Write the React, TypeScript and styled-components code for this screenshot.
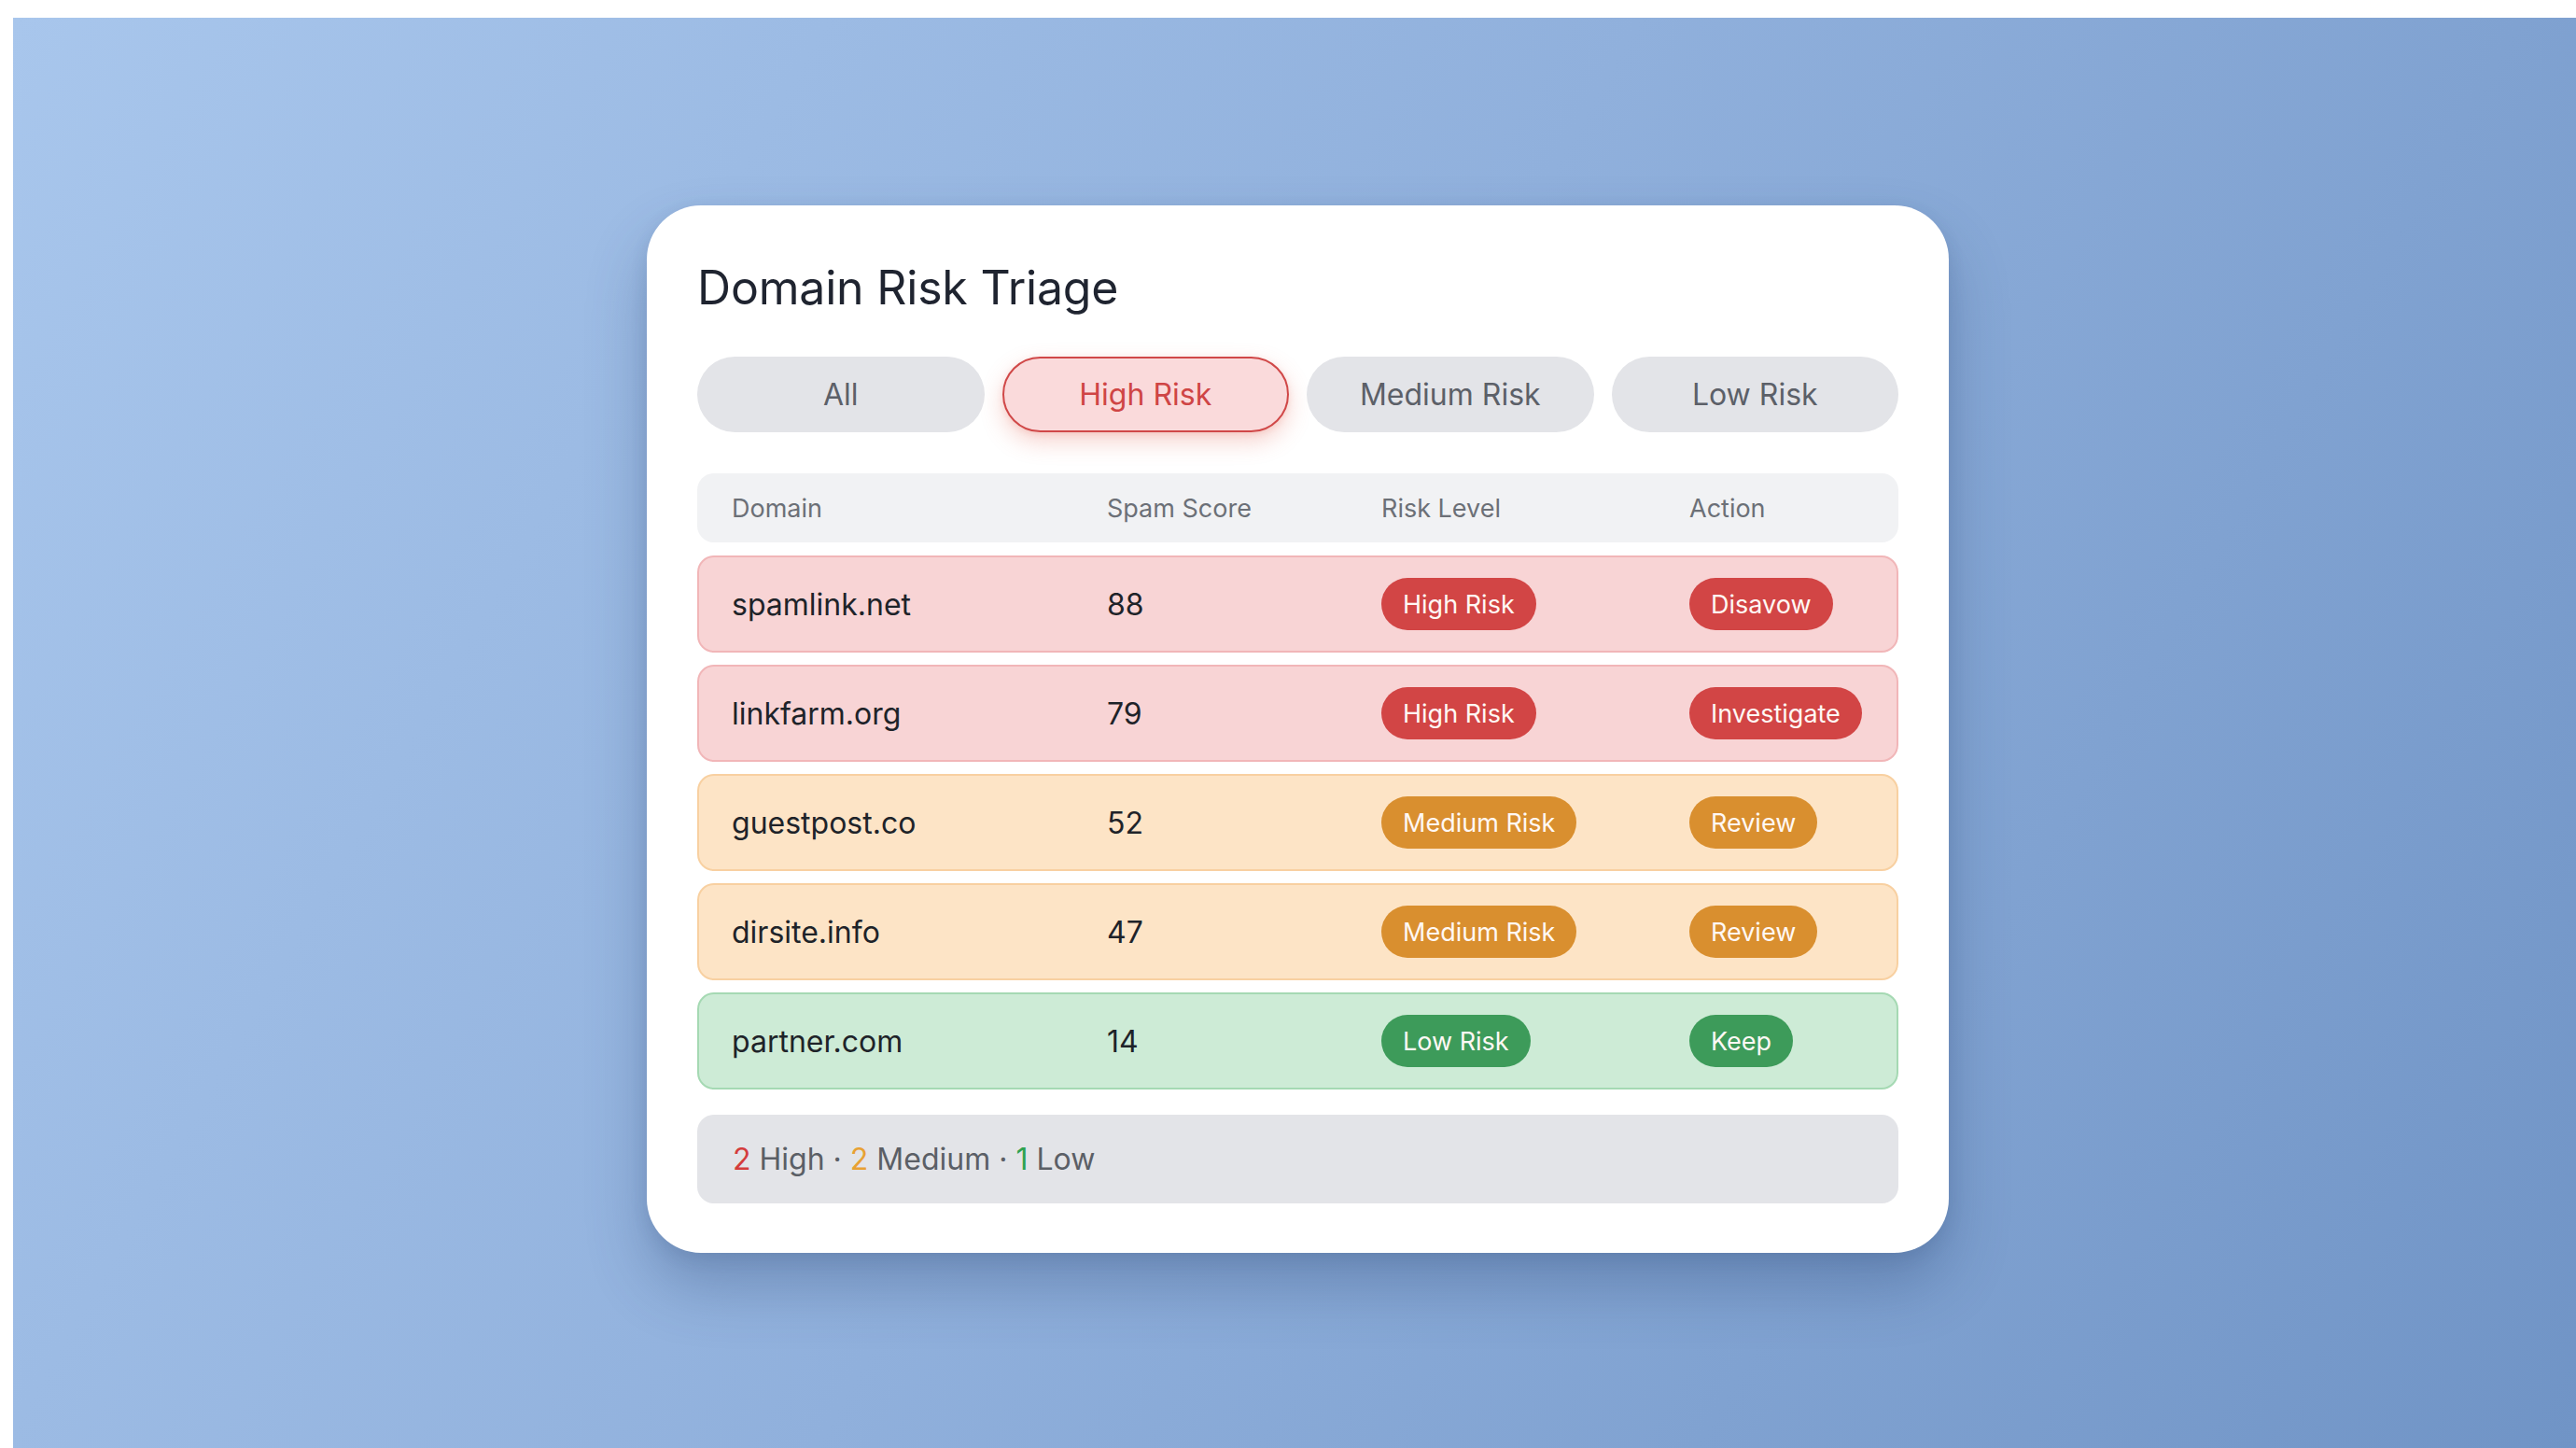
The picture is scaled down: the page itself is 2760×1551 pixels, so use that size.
import React from "react";
import styled, { createGlobalStyle } from "styled-components";

const GlobalStyle = createGlobalStyle`
  html, body {
    margin: 0;
    padding: 0;
    background: #ffffff;
  }
  * { box-sizing: border-box; }
  body {
    font-family: Inter, "Noto Sans", "Liberation Sans", sans-serif;
    -webkit-font-smoothing: antialiased;
  }
`;

type Tone = "high" | "medium" | "low";

const tones: Record<Tone, { bg: string; border: string; badge: string; count: string }> = {
  high: { bg: "#f8d4d5", border: "#f1b6b8", badge: "#d24545", count: "#d43c3c" },
  medium: { bg: "#fde4c6", border: "#f8d0a1", badge: "#d98f2f", count: "#e8a133" },
  low: { bg: "#cdebd6", border: "#a5d9b3", badge: "#3d9b5a", count: "#2fa24f" },
};

const Backdrop = styled.div`
  margin: 19px 0 0 14px;
  width: calc(100vw - 14px);
  height: calc(100vh - 19px);
  background: linear-gradient(120deg, #a8c6ec 0%, #90b0dc 48%, #7094c6 100%);
  display: flex;
  justify-content: center;
  align-items: flex-start;
  padding: 201px 0 0 7px;
  overflow: hidden;
`;

const Card = styled.section`
  width: 1395px;
  background: #ffffff;
  border-radius: 58px;
  padding: 58px 54px 53px 54px;
  box-shadow: 0 36px 64px rgba(38, 62, 110, 0.3), 0 6px 18px rgba(38, 62, 110, 0.12);
  display: flex;
  flex-direction: column;
`;

const Title = styled.h1`
  margin: 0;
  font-size: 50px;
  line-height: 60px;
  font-weight: 400;
  color: #1f2430;
  letter-spacing: -0.2px;
`;

const Tabs = styled.div`
  margin-top: 44px;
  display: grid;
  grid-template-columns: repeat(4, 1fr);
  gap: 19px;
`;

const Tab = styled.button<{ $active?: boolean }>`
  height: 81px;
  border-radius: 41px;
  font-family: inherit;
  font-size: 32px;
  font-weight: 400;
  cursor: pointer;
  border: 2px solid ${(p) => (p.$active ? "#d04848" : "transparent")};
  background: ${(p) => (p.$active ? "#fadadb" : "#e3e4e8")};
  color: ${(p) => (p.$active ? "#cf4545" : "#5c6068")};
  box-shadow: ${(p) =>
    p.$active ? "0 10px 24px rgba(226, 96, 80, 0.28), 0 2px 6px rgba(226, 96, 80, 0.15)" : "none"};
`;

const columns = "402px 294px 330px 1fr";

const HeaderRow = styled.div`
  margin-top: 44px;
  height: 74px;
  border-radius: 18px;
  background: #f1f2f4;
  display: grid;
  grid-template-columns: ${columns};
  align-items: center;
  padding-left: 37px;
`;

const HeaderCell = styled.span`
  font-size: 27px;
  color: #6c7077;
`;

const Rows = styled.div`
  margin-top: 14px;
  display: flex;
  flex-direction: column;
  gap: 13px;
`;

const Row = styled.div<{ $tone: Tone }>`
  height: 104px;
  border-radius: 18px;
  border: 2px solid ${(p) => tones[p.$tone].border};
  background: ${(p) => tones[p.$tone].bg};
  display: grid;
  grid-template-columns: ${columns};
  align-items: center;
  padding-left: 35px;
`;

const Cell = styled.span`
  font-size: 32px;
  color: #1e2329;
`;

const BadgeCell = styled.div`
  display: flex;
  align-items: center;
`;

const Badge = styled.span<{ $tone: Tone }>`
  display: inline-flex;
  align-items: center;
  height: 56px;
  padding: 0 23px;
  border-radius: 28px;
  background: ${(p) => tones[p.$tone].badge};
  color: #fff8f4;
  font-size: 27px;
  white-space: nowrap;
`;

const Summary = styled.div`
  margin-top: 27px;
  height: 95px;
  border-radius: 18px;
  background: #e3e4e8;
  display: flex;
  align-items: center;
  padding-left: 38px;
  font-size: 32px;
  color: #5b5f66;
  white-space: pre;
`;

const Count = styled.span<{ $tone: Tone }>`
  color: ${(p) => tones[p.$tone].count};
`;

const data: { domain: string; score: number; tone: Tone; level: string; action: string }[] = [
  { domain: "spamlink.net", score: 88, tone: "high", level: "High Risk", action: "Disavow" },
  { domain: "linkfarm.org", score: 79, tone: "high", level: "High Risk", action: "Investigate" },
  { domain: "guestpost.co", score: 52, tone: "medium", level: "Medium Risk", action: "Review" },
  { domain: "dirsite.info", score: 47, tone: "medium", level: "Medium Risk", action: "Review" },
  { domain: "partner.com", score: 14, tone: "low", level: "Low Risk", action: "Keep" },
];

const tabs = ["All", "High Risk", "Medium Risk", "Low Risk"];

export default function App() {
  return (
    <>
      <GlobalStyle />
      <Backdrop>
        <Card>
          <Title>Domain Risk Triage</Title>
          <Tabs>
            {tabs.map((t) => (
              <Tab key={t} $active={t === "High Risk"}>
                {t}
              </Tab>
            ))}
          </Tabs>
          <HeaderRow>
            <HeaderCell>Domain</HeaderCell>
            <HeaderCell>Spam Score</HeaderCell>
            <HeaderCell>Risk Level</HeaderCell>
            <HeaderCell>Action</HeaderCell>
          </HeaderRow>
          <Rows>
            {data.map((d) => (
              <Row key={d.domain} $tone={d.tone}>
                <Cell>{d.domain}</Cell>
                <Cell>{d.score}</Cell>
                <BadgeCell>
                  <Badge $tone={d.tone}>{d.level}</Badge>
                </BadgeCell>
                <BadgeCell>
                  <Badge $tone={d.tone}>{d.action}</Badge>
                </BadgeCell>
              </Row>
            ))}
          </Rows>
          <Summary>
            <Count $tone="high">2</Count>
            {" High · "}
            <Count $tone="medium">2</Count>
            {" Medium · "}
            <Count $tone="low">1</Count>
            {" Low"}
          </Summary>
        </Card>
      </Backdrop>
    </>
  );
}
